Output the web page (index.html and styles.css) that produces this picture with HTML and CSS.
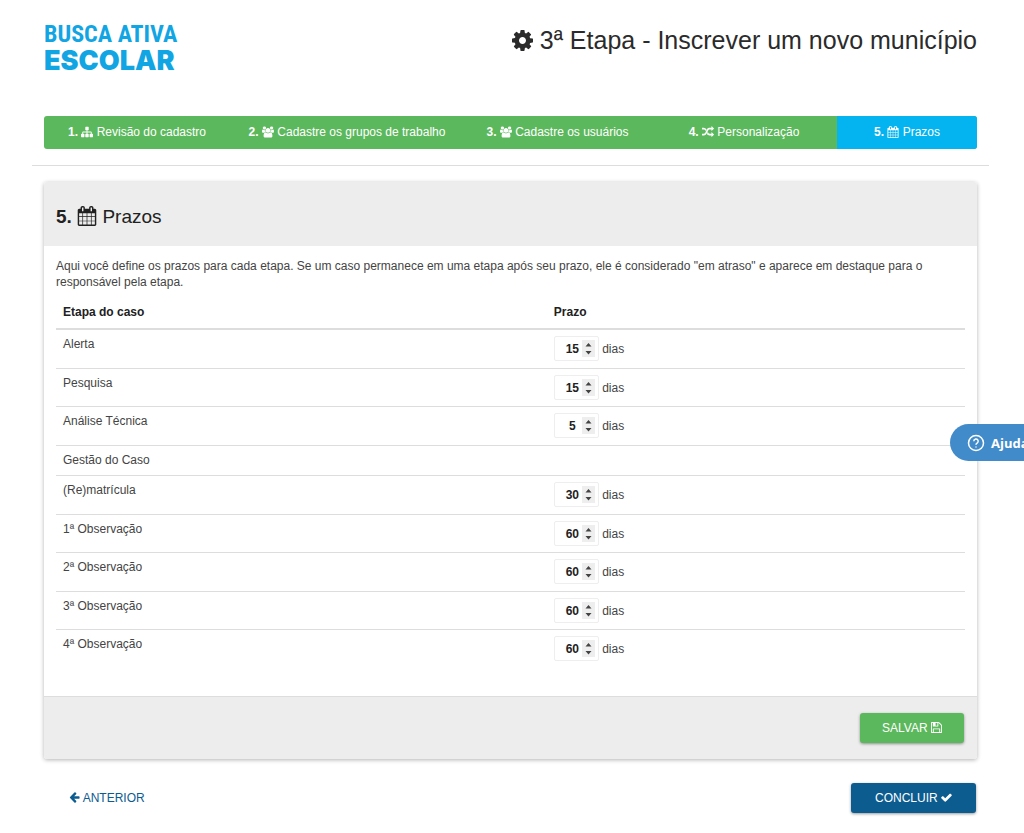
FILE: index.html
```html
<!DOCTYPE html>
<html lang="pt-BR">
<head>
<meta charset="utf-8">
<title>Busca Ativa Escolar</title>
<link rel="stylesheet" href="styles.css">
</head>
<body>
<svg class="sprite" aria-hidden="true">
  <symbol id="cog" viewBox="128 128 1536 1536"><path d="M1152 896q0-106-75-181t-181-75-181 75-75 181 75 181 181 75 181-75 75-181zm512-109v222q0 12-8 23t-20 13l-185 28q-19 54-39 91 35 50 107 138 10 12 10 25t-9 23q-27 37-99 108t-94 71q-12 0-26-9l-138-108q-44 23-91 38-16 136-29 186-7 28-36 28h-222q-14 0-24.5-8.5t-11.5-21.5l-28-184q-49-16-90-37l-141 107q-10 9-25 9-14 0-25-11-126-114-165-168-7-10-7-23 0-12 8-23 15-21 51-66.5t54-70.5q-27-50-41-99l-183-27q-13-2-21-12.5t-8-23.5v-222q0-12 8-23t19-13l186-28q14-46 39-92-40-57-107-138-10-12-10-24 0-10 9-23 26-36 98.5-107.5t94.5-71.5q13 0 26 10l138 107q44-23 91-38 16-136 29-186 7-28 36-28h222q14 0 24.5 8.5t11.5 21.5l28 184q49 16 90 37l142-107q9-9 24-9 13 0 25 10 129 119 165 170 7 8 7 22 0 12-8 23-15 21-51 66.5t-54 70.5q26 50 41 98l183 28q13 2 21 12.5t8 23.5z"/></symbol>
  <symbol id="sitemap" viewBox="0 0 1792 1792"><path d="M1792 1248v320q0 40-28 68t-68 28h-320q-40 0-68-28t-28-68v-320q0-40 28-68t68-28h96v-192h-512v192h96q40 0 68 28t28 68v320q0 40-28 68t-68 28h-320q-40 0-68-28t-28-68v-320q0-40 28-68t68-28h96v-192h-512v192h96q40 0 68 28t28 68v320q0 40-28 68t-68 28h-320q-40 0-68-28t-28-68v-320q0-40 28-68t68-28h96v-192q0-52 38-90t90-38h512v-192h-96q-40 0-68-28t-28-68v-320q0-40 28-68t68-28h320q40 0 68 28t28 68v320q0 40-28 68t-68 28h-96v192h512q52 0 90 38t38 90v192h96q40 0 68 28t28 68z"/></symbol>
  <symbol id="users" viewBox="-64 0 1920 1792"><path d="M529 896q-162 5-265 128h-134q-82 0-138-40.500t-56-118.500q0-353 124-353 6 0 43.500 21t97.500 42.500 119 21.500q67 0 133-23-5 37-5 66 0 139 81 256zm1071 637q0 120-73 189.500t-194 69.500h-874q-121 0-194-69.500t-73-189.500q0-53 3.500-103.500t14-109 26.500-108.500 43-97.500 62-81 85.500-53.500 111.500-20q10 0 43 21.500t73 48 107 48 135 21.500 135-21.500 107-48 73-48 43-21.500q61 0 111.500 20t85.500 53.500 62 81 43 97.500 26.500 108.500 14 109 3.500 103.500zm-1024-1277q0 106-75 181t-181 75-181-75-75-181 75-181 181-75 181 75 75 181zm704 384q0 159-112.500 271.500t-271.500 112.500-271.500-112.500-112.500-271.500 112.500-271.500 271.500-112.500 271.500 112.500 112.500 271.500zm576 225q0 78-56 118.500t-138 40.500h-134q-103-123-265-128 81-117 81-256 0-29-5-66 66 23 133 23 59 0 119-21.500t97.500-42.500 43.500-21q124 0 124 353zm-128-609q0 106-75 181t-181 75-181-75-75-181 75-181 181-75 181 75 75 181z"/></symbol>
  <symbol id="random" viewBox="0 0 1792 1792"><path d="M666 481q-60 92-137 273-22-45-37-72.500t-40.500-63.500-51-56.500-63-35-81.500-14.500h-224q-14 0-23-9t-9-23v-192q0-14 9-23t23-9h224q250 0 410 225zm1126 799q0 14-9 23l-320 320q-9 9-23 9-13 0-22.500-9.500t-9.500-22.500v-192q-32 0-85 .5t-81 1-73-1-71-5-64-10.500-63-18.500-58-28.500-59-40-55-53.500-56-69.500q59-93 136-273 22 45 37 72.500t40.500 63.500 51 56.500 63 35 81.500 14.500h256v-192q0-14 9-23t23-9q12 0 24 10l319 319q9 9 9 23zm0-896q0 14-9 23l-320 320q-9 9-23 9-13 0-22.500-9.500t-9.500-22.500v-192h-256q-48 0-87 15t-69 45-51 61.500-45 77.500q-32 62-78 171-29 66-49.500 111t-54 105-64 100-74 83-90 68.500-106.500 42-128 16.500h-224q-14 0-23-9t-9-23v-192q0-14 9-23t23-9h224q48 0 87-15t69-45 51-61.500 45-77.500q32-62 78-171 29-66 49.500-111t54-105 64-100 74-83 90-68.500 106.500-42 128-16.500h256v-192q0-14 9-23t23-9q12 0 24 10l319 319q9 9 9 23z"/></symbol>
  <symbol id="calendar" viewBox="64 0 1664 1792"><path d="M192 1664h288v-288h-288v288zm352 0h320v-288h-320v288zm-352-352h288v-320h-288v320zm352 0h320v-320h-320v320zm-352-384h288v-288h-288v288zm736 736h320v-288h-320v288zm-384-736h320v-288h-320v288zm768 736h288v-288h-288v288zm-384-352h320v-320h-320v320zm-352-864v-288q0-13-9.500-22.500t-22.500-9.500h-64q-13 0-22.500 9.500t-9.500 22.500v288q0 13 9.500 22.500t22.500 9.500h64q13 0 22.500-9.500t9.500-22.500zm736 864h288v-320h-288v320zm-384-384h320v-288h-320v288zm384 0h288v-288h-288v288zm32-480v-288q0-13-9.500-22.500t-22.500-9.500h-64q-13 0-22.500 9.500t-9.500 22.500v288q0 13 9.500 22.500t22.500 9.500h64q13 0 22.500-9.500t9.500-22.500zm384-64v1280q0 52-38 90t-90 38h-1408q-52 0-90-38t-38-90v-1280q0-52 38-90t90-38h128v-96q0-66 47-113t113-47h64q66 0 113 47t47 113v96h384v-96q0-66 47-113t113-47h64q66 0 113 47t47 113v96h128q52 0 90 38t38 90z"/></symbol>
  <symbol id="floppy" viewBox="128 128 1536 1536"><path d="M512 1536h768v-384h-768v384zm896 0h128v-896q0-14-10-38.500t-20-34.500l-281-281q-10-10-34-20t-39-10v416q0 40-28 68t-68 28h-576q-40 0-68-28t-28-68v-416h-128v1280h128v-416q0-40 28-68t68-28h832q40 0 68 28t28 68v416zm-384-928v-320q0-13-9.500-22.500t-22.500-9.500h-192q-13 0-22.500 9.500t-9.500 22.500v320q0 13 9.500 22.500t22.500 9.500h192q13 0 22.500-9.500t9.500-22.500zm640 32v928q0 40-28 68t-68 28h-1344q-40 0-68-28t-28-68v-1344q0-40 28-68t68-28h928q40 0 88 20t76 48l280 280q28 28 48 76t20 88z"/></symbol>
  <symbol id="check" viewBox="100 128 1600 1536"><path d="M1671 566q0 40-28 68l-724 724-136 136q-28 28-68 28t-68-28l-136-136-362-362q-28-28-28-68t28-68l136-136q28-28 68-28t68 28l294 295 656-657q28-28 68-28t68 28l136 136q28 28 28 68z"/></symbol>
  <symbol id="arrow" viewBox="128 128 1536 1664"><path d="M1664 896v128q0 53-32.500 90.500t-84.500 37.500h-704l293 294q38 36 38 90t-38 90l-75 76q-37 37-90 37-52 0-91-37l-651-652q-37-37-37-90 0-52 37-91l651-650q38-38 91-38 52 0 90 38l75 74q38 38 38 91t-38 91l-293 293h704q52 0 84.500 37.500t32.500 90.500z"/></symbol>
</svg>

<div class="page">
  <header class="top">
    <a class="logo" href="#"><span class="logo-busca">BUSCA ATIVA</span><span class="logo-escolar">ESCOLAR</span></a>
    <h1 class="title"><svg class="icon icon-title"><use href="#cog"/></svg> 3ª Etapa - Inscrever um novo município</h1>
  </header>

  <nav class="steps">
    <a class="step step-review" href="#"><b>1.</b> <svg class="icon"><use href="#sitemap"/></svg> Revisão do cadastro</a>
    <a class="step step-groups" href="#"><b>2.</b> <svg class="icon"><use href="#users"/></svg> Cadastre os grupos de trabalho</a>
    <a class="step step-users" href="#"><b>3.</b> <svg class="icon"><use href="#users"/></svg> Cadastre os usuários</a>
    <a class="step step-custom" href="#"><b>4.</b> <svg class="icon"><use href="#random"/></svg> Personalização</a>
    <a class="step step-current" href="#"><b>5.</b> <svg class="icon"><use href="#calendar"/></svg> Prazos</a>
  </nav>
  <hr class="rule">

  <form class="panel">
    <div class="panel-head">
      <h2 class="panel-title"><b>5.</b> <svg class="icon icon-panel"><use href="#calendar"/></svg> Prazos</h2>
    </div>
    <div class="panel-body">
      <p class="intro">Aqui você define os prazos para cada etapa. Se um caso permanece em uma etapa após seu prazo, ele é considerado "em atraso" e aparece em destaque para o responsável pela etapa.</p>
      <table class="deadlines">
        <thead><tr><th class="col-stage">Etapa do caso</th><th>Prazo</th></tr></thead>
        <tbody>
          <tr><td><label for="d1">Alerta</label></td><td><input class="days" id="d1" type="number" value="15"> dias</td></tr>
          <tr><td><label for="d2">Pesquisa</label></td><td><input class="days" id="d2" type="number" value="15"> dias</td></tr>
          <tr><td><label for="d3">Análise Técnica</label></td><td><input class="days" id="d3" type="number" value="5"> dias</td></tr>
          <tr class="no-deadline"><td>Gestão do Caso</td><td></td></tr>
          <tr><td><label for="d5">(Re)matrícula</label></td><td><input class="days" id="d5" type="number" value="30"> dias</td></tr>
          <tr><td><label for="d6">1ª Observação</label></td><td><input class="days" id="d6" type="number" value="60"> dias</td></tr>
          <tr><td><label for="d7">2ª Observação</label></td><td><input class="days" id="d7" type="number" value="60"> dias</td></tr>
          <tr><td><label for="d8">3ª Observação</label></td><td><input class="days" id="d8" type="number" value="60"> dias</td></tr>
          <tr><td><label for="d9">4ª Observação</label></td><td><input class="days" id="d9" type="number" value="60"> dias</td></tr>
        </tbody>
      </table>
    </div>
    <div class="panel-foot">
      <button class="btn btn-save" type="button">SALVAR <svg class="icon icon-small"><use href="#floppy"/></svg></button>
    </div>
  </form>

  <div class="actions">
    <a class="back" href="#"><svg class="icon icon-small"><use href="#arrow"/></svg> ANTERIOR</a>
    <button class="btn btn-finish" type="button">CONCLUIR <svg class="icon icon-small"><use href="#check"/></svg></button>
  </div>
</div>

<button class="help" type="button">
  <svg class="help-icon" viewBox="0 0 18 18"><circle cx="9" cy="9" r="7.500"/><path d="M6.800 7.200a2.200 2.200 0 1 1 3.300 1.900c-.8.500-1.100.8-1.100 1.600"/><path d="M9 12.400v1.200"/></svg>
  <span>Ajuda</span>
</button>
</body>
</html>
```

FILE: styles.css
```css
* { box-sizing: border-box; }

body {
  margin: 0;
  background: #fff;
  color: #444;
  font: 12px/16px "Liberation Sans", Arial, sans-serif;
  overflow-x: hidden;
}

.sprite { display: none; }

.icon {
  width: 12px;
  height: 12px;
  fill: currentColor;
  vertical-align: -2px;
}

.page { padding: 20px 47px 16px 44px; }

.top {
  display: flex;
  justify-content: space-between;
  align-items: flex-start;
  height: 96px;
}

.logo {
  display: flex;
  flex-direction: column;
  color: #12a5e4;
  text-decoration: none;
  white-space: nowrap;
}
.logo-busca { font: 700 24px/28px "Liberation Sans Narrow", "Roboto Condensed", sans-serif; }
.logo-escolar { font: 900 27px/26px Inter, sans-serif; }

.title {
  margin: 0;
  color: #2b2b2b;
  font-size: 25px;
  font-weight: 400;
  line-height: 40px;
}
.icon-title { width: 21px; height: 21px; }

.steps {
  display: flex;
  border-radius: 3px;
  overflow: hidden;
  background: #5cb85c;
}
.step {
  padding: 8px 0;
  color: #fff;
  line-height: 17px;
  text-align: center;
  text-decoration: none;
  white-space: nowrap;
}
.step-review { flex: 186; }
.step-groups { flex: 234; }
.step-users { flex: 187; }
.step-custom { flex: 186; }
.step-current { flex: 140; background: #03b4f0; }

.rule {
  margin: 16px -12px;
  border: 0;
  border-top: 1px solid #ddd;
}

.panel {
  border-radius: 3px;
  background: #fff;
  box-shadow: 0 1px 4px rgba(0, 0, 0, 0.3);
}
.panel-head {
  padding: 20px 12px;
  border-radius: 3px 3px 0 0;
  background: #ededed;
}
.panel-title {
  margin: 0;
  color: #212121;
  font-size: 19px;
  font-weight: 400;
  line-height: 30px;
  height: 24px;
}
.icon-panel { width: 20px; height: 20px; vertical-align: -3px; }

.panel-body { padding: 12px 12px 27px; }
.intro { margin: 0 0 8px; }

.deadlines {
  width: 100%;
  border-collapse: separate;
  border-spacing: 0;
}
.deadlines th {
  height: 32px;
  padding: 6px 7px 8px;
  border-bottom: 2px solid #ddd;
  color: #212121;
  text-align: left;
}
.col-stage { width: 54%; }
.deadlines td {
  height: 38px;
  padding: 6px 7px;
  border-bottom: 1px solid #ddd;
  vertical-align: top;
}
.deadlines tbody tr:nth-child(odd) td { height: 39px; }
.deadlines tbody .no-deadline td { height: 30px; }
.deadlines tr:last-child td { border-bottom: 0; }

.days {
  width: 45px;
  height: 25px;
  padding: 0 3px 0 8px;
  border: 1px solid #eee;
  border-radius: 2px;
  color: #222;
  background: #fff;
  font: inherit;
  font-weight: 700;
  text-align: center;
}
.days::-webkit-inner-spin-button {
  -webkit-appearance: none;
  width: 13px;
  height: 17px;
  opacity: 1;
  background: #eee url("data:image/svg+xml,%3Csvg xmlns='http://www.w3.org/2000/svg' width='13' height='17'%3E%3Cpath d='M3.500 6.500l3-3.500 3 3.500zM3.500 11l3 3.500 3-3.500z' fill='%23444'/%3E%3C/svg%3E") center no-repeat;
}

.panel-foot {
  display: flex;
  justify-content: flex-end;
  padding: 16px 13px;
  border-top: 1px solid #ddd;
  border-radius: 0 0 3px 3px;
  background: #ededed;
}

.btn {
  height: 30px;
  padding: 0 24px;
  border: 0;
  border-radius: 3px;
  color: #fff;
  font: inherit;
  box-shadow: 0 1px 3px rgba(0, 0, 0, 0.4);
}
.btn-save { padding: 0 22px; background: #5cb85c; }
.btn-finish { background: #0c5c90; }
.icon-small { width: 11px; height: 11px; vertical-align: -1px; }

.actions {
  display: flex;
  justify-content: space-between;
  align-items: center;
  padding: 24px 1px 0 25px;
}
.back { color: #0c5c90; text-decoration: none; }

.help {
  position: fixed;
  top: 424px;
  right: -22px;
  display: flex;
  align-items: center;
  gap: 6px;
  width: 96px;
  height: 37px;
  padding: 0 0 0 17px;
  border: 0;
  border-radius: 19px;
  color: #fff;
  background: #428bca;
  font: 700 13px/20px "Open Sans", sans-serif;
}
.help-icon {
  width: 18px;
  height: 18px;
  fill: none;
  stroke: #fff;
  stroke-width: 1.5;
}
```
